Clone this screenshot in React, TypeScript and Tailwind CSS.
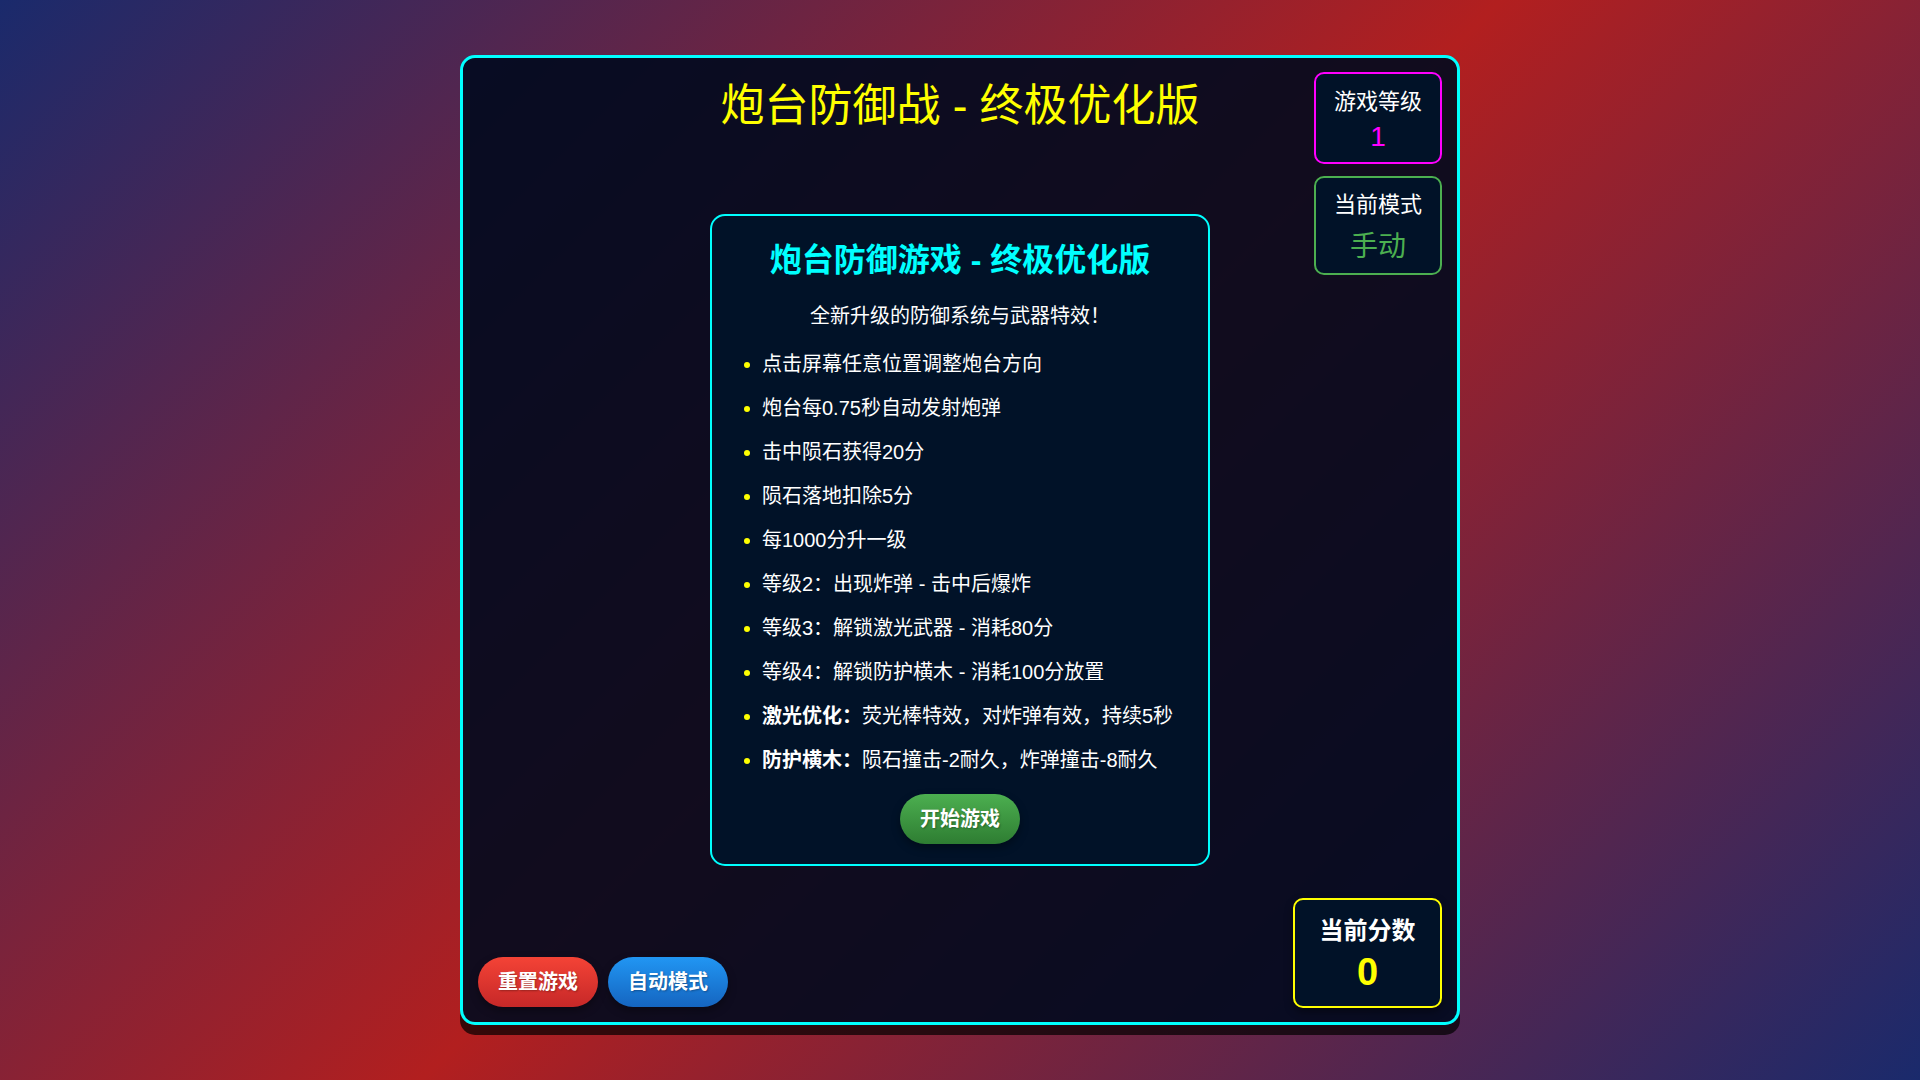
import React from "react";

const font = { fontFamily: '"Liberation Sans", "Noto Sans CJK SC", sans-serif' };

type Item = { bold?: string; text: string };

const items: Item[] = [
  { text: "点击屏幕任意位置调整炮台方向" },
  { text: "炮台每0.75秒自动发射炮弹" },
  { text: "击中陨石获得20分" },
  { text: "陨石落地扣除5分" },
  { text: "每1000分升一级" },
  { text: "等级2：出现炸弹 - 击中后爆炸" },
  { text: "等级3：解锁激光武器 - 消耗80分" },
  { text: "等级4：解锁防护横木 - 消耗100分放置" },
  { bold: "激光优化：", text: "荧光棒特效，对炸弹有效，持续5秒" },
  { bold: "防护横木：", text: "陨石撞击-2耐久，炸弹撞击-8耐久" },
];

export default function App() {
  return (
    <div
      className="w-full h-screen flex items-center justify-center bg-[linear-gradient(135deg,#1a2a6c,#b21f1f,#1a2a6c)]"
      style={font}
    >
      <div className="relative w-[1000px] h-[970px] border-[3px] border-[#00ffff] rounded-[15px] bg-[rgba(0,10,30,0.9)] shadow-[0_10px_0_rgba(0,0,0,0.7)]">
        {/* Title */}
        <h1 className="pt-[18px] text-center text-[44px] leading-[60px] text-[#ffff00] font-normal">
          炮台防御战 - 终极优化版
        </h1>

        {/* Start overlay */}
        <div className="absolute inset-0 flex items-center justify-center">
          <div className="w-[500px] border-2 border-[#00ffff] rounded-[15px] bg-[#011228] px-[30px] pt-[22px] pb-[20px] flex flex-col">
            <h2 className="text-center text-[32px] leading-[44px] font-bold text-[#00ffff]">
              炮台防御游戏 - 终极优化版
            </h2>
            <p className="mt-[19px] text-center text-[20px] leading-[30px] text-white">
              全新升级的防御系统与武器特效！
            </p>
            <ul className="mt-[11px] flex flex-col">
              {items.map((it, i) => (
                <li key={i} className="h-[44px] flex items-center gap-[12px] text-[20px] text-white">
                  <span className="ml-[2px] mt-[2px] w-[6px] h-[6px] rounded-full bg-[#ffff00] shrink-0" />
                  <span className="leading-[28px] whitespace-nowrap">
                    {it.bold && <strong className="font-bold">{it.bold}</strong>}
                    {it.text}
                  </span>
                </li>
              ))}
            </ul>
            <button className="mt-[12px] mx-auto w-[120px] h-[50px] rounded-full bg-[linear-gradient(180deg,#4caf50,#2e7d32)] text-white text-[20px] font-bold shadow-[0_4px_8px_rgba(0,0,0,0.35)] [text-shadow:1px_1px_2px_rgba(0,0,0,0.3)]">
              开始游戏
            </button>
          </div>
        </div>

        {/* Top-right HUD */}
        <div className="absolute top-[14px] right-[15px] flex flex-col gap-[12px]">
          <div className="w-[128px] h-[92px] border-2 border-[#ff00ff] rounded-[10px] bg-[#011228] flex flex-col items-center pt-[14px]">
            <div className="text-[22px] leading-[28px] text-white">游戏等级</div>
            <div className="mt-[5px] text-[28px] leading-[32px] text-[#ff00ff]">1</div>
          </div>
          <div className="w-[128px] h-[99px] border-2 border-[#4caf50] rounded-[10px] bg-[#011228] flex flex-col items-center pt-[13px]">
            <div className="text-[22px] leading-[28px] text-white">当前模式</div>
            <div className="mt-[8px] text-[28px] leading-[40px] text-[#4caf50]">手动</div>
          </div>
        </div>

        {/* Score */}
        <div className="absolute bottom-[14px] right-[15px] w-[149px] h-[110px] border-2 border-[#ffff00] rounded-[10px] bg-[#011228] flex flex-col items-center pt-[16px] shadow-[0_4px_8px_rgba(0,0,0,0.4)]">
          <div className="text-[24px] leading-[30px] font-bold text-white">当前分数</div>
          <div className="mt-[6px] text-[38px] leading-[40px] font-bold text-[#ffff00]">0</div>
        </div>

        {/* Bottom-left controls */}
        <div className="absolute left-[15px] bottom-[15px] flex gap-[10px]">
          <button className="w-[120px] h-[50px] rounded-full bg-[linear-gradient(180deg,#f44336,#c62828)] text-white text-[20px] font-bold shadow-[0_4px_8px_rgba(0,0,0,0.35)] [text-shadow:1px_1px_2px_rgba(0,0,0,0.3)]">
            重置游戏
          </button>
          <button className="w-[120px] h-[50px] rounded-full bg-[linear-gradient(180deg,#2196f3,#1565c0)] text-white text-[20px] font-bold shadow-[0_4px_8px_rgba(0,0,0,0.35)] [text-shadow:1px_1px_2px_rgba(0,0,0,0.3)]">
            自动模式
          </button>
        </div>
      </div>
    </div>
  );
}
